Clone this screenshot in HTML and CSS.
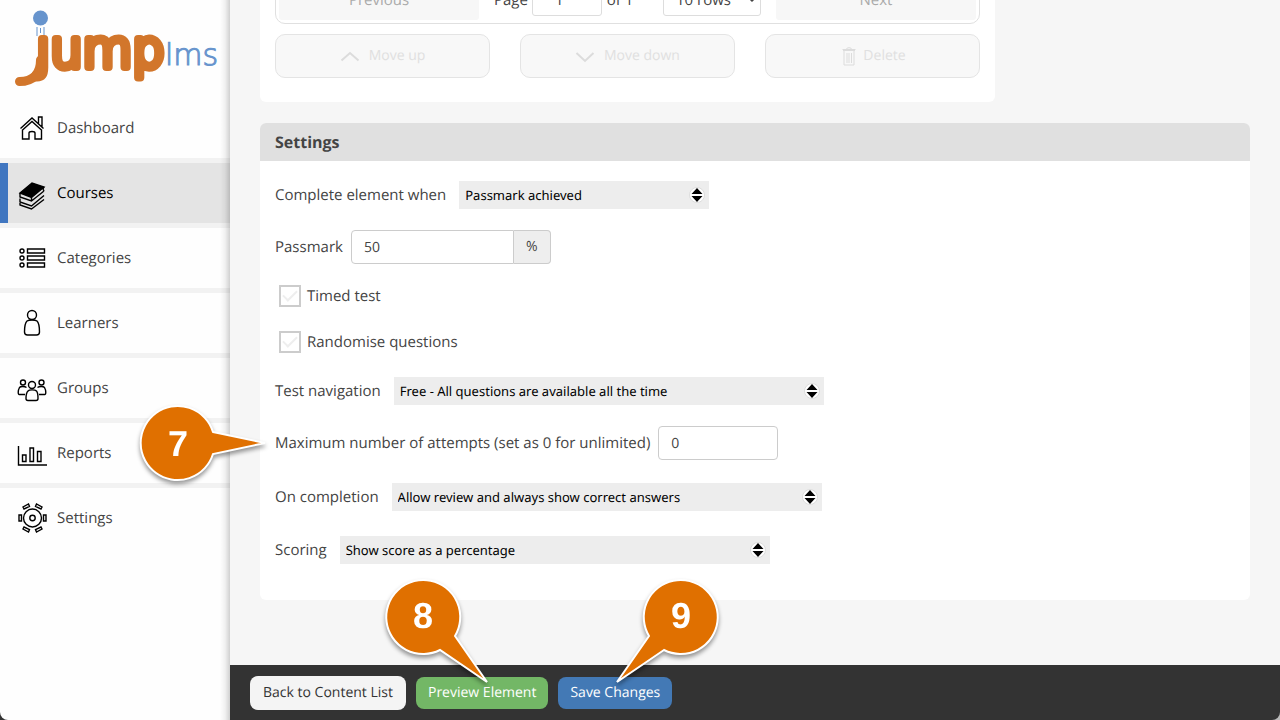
FILE: index.html
```html
<!DOCTYPE html>
<html lang="en">
<head>
<meta charset="utf-8">
<meta name="viewport" content="width=device-width, initial-scale=1">
<title>JumpLMS - Test settings</title>
<link rel="stylesheet" href="styles.css">
</head>
<body>
<div class="app">
  <div class="side-wrap">
  <aside class="sidebar">
    <svg class="logo" viewBox="0 0 230 98" role="img" aria-label="jump lms">
      <circle class="logo-ball" cx="40.500" cy="18" r="7.500"/>
      <path class="logo-motion" d="M37 27v9M40.500 28v5M44 27v9"/>
      <path class="logo-swoosh" d="M40.500 60C40.500 74 33 81.500 19.500 81.500"/>
      <text class="logo-jump" x="36" y="67">ȷump</text>
      <text class="logo-lms" x="165" y="65">lms</text>
    </svg>
    <nav class="menu">
      <a class="menu-item" href="#">
        <svg class="icon" viewBox="0 0 30 30"><path d="M3.500 15.500 15 5l11.500 10.500M5 17.500 15 8.500l10 9M21.500 10.500V4h3.500v10M5.500 17.500v8.500H12v-6c0-2 6-2 6 0v6h6.500v-8.500"/></svg>
        <span>Dashboard</span></a>
      <a class="menu-item is-active" href="#">
        <svg class="icon icon-low" viewBox="0 0 30 30"><path class="solid" d="M3 12 15 2l12 4-12.500 10.500z"/><path d="M3 12v4l11.500 4L27 10M14.500 16.500V20M27 6l-1 2 1 2M3 17.500V21l11.500 4L27 14.500M3 22v2l11.500 4L27 18.500"/></svg>
        <span>Courses</span></a>
      <a class="menu-item" href="#">
        <svg class="icon" viewBox="0 0 30 30"><circle cx="5" cy="8" r="2"/><circle cx="5" cy="15" r="2"/><circle cx="5" cy="22" r="2"/><path d="M10.500 6H27.500v4h-17zM10.500 13H27.500v4h-17zM10.500 20H27.500v4h-17z"/></svg>
        <span>Categories</span></a>
      <a class="menu-item" href="#">
        <svg class="icon" viewBox="0 0 30 30"><circle cx="15" cy="7" r="4.500"/><path d="M10 13c1.500-1 2-1 5-1s3.500 0 5 1c2 2 2.500 6 2.500 11 0 2-1 3-3 3h-9c-2 0-3-1-3-3 0-5 .5-9 2.500-11z"/></svg>
        <span>Learners</span></a>
      <a class="menu-item" href="#">
        <svg class="icon" viewBox="0 0 30 30"><circle cx="15" cy="12" r="3.500"/><circle cx="6" cy="9.500" r="2.500"/><circle cx="24.500" cy="9.500" r="2.500"/><path d="M11 18c1-1.500 7-1.500 8.500 0 1 1 1.500 4 1.500 7.500 0 1.500-1 2-2 2h-8c-1 0-2-.5-2-2 0-3.500 1-6.500 2-7.500zM8 21.500H2c-1 0-1.200-4 .5-7 1-1.200 5-1.500 7 0M22 21.500h6c1 0 1.200-4-.5-7-1-1.200-5-1.500-7 0"/></svg>
        <span>Groups</span></a>
      <a class="menu-item" href="#">
        <svg class="icon" viewBox="0 0 30 30"><path d="M1.500 8v19H30M5.500 17H9v6.500H5.500zM13 10h3.500v13.500H13zM20.500 13.500H24v10h-3.500z"/></svg>
        <span>Reports</span></a>
      <a class="menu-item" href="#">
        <svg class="icon" viewBox="0 0 30 30"><circle cx="15.500" cy="15" r="9"/><circle cx="15.500" cy="15" r="2.700"/><path d="M4.500 12H2v6h2.500zM26.500 12H29v6h-2.500zM7 6 6 4l5.500-3 1 2.500zM24 6l1-2-5.500-3-1 2.500zM7 24l-1 2 5.500 3 1-2.500zM24 24l1 2-5.500 3-1-2.500z"/></svg>
        <span>Settings</span></a>
    </nav>
  </aside>
  </div>

  <div class="workspace">
    <main class="content">
      <section class="card questions">
        <div class="pager">
          <button class="pager-btn" type="button" disabled>Previous</button>
          <div class="pager-mid">
            <label class="pager-page">Page <input class="pager-input" type="text" value="1"></label>
            <span class="pager-total">of 1</span>
            <span class="rows-wrap">
              <select class="pager-select" aria-label="Rows per page"><option>10 rows</option></select>
              <svg class="rows-arrow" viewBox="0 0 8 6"><path d="M1 1l3 3 3-3"/></svg>
            </span>
          </div>
          <button class="pager-btn" type="button" disabled>Next</button>
        </div>
        <div class="tools">
          <button class="tool" type="button" disabled><svg class="tool-icon" viewBox="0 0 20 20"><path d="M1.500 14.500 10 7l8.500 7.500"/></svg>Move up</button>
          <button class="tool" type="button" disabled><svg class="tool-icon" viewBox="0 0 20 20"><path d="M1.500 7 10 15l8.500-8"/></svg>Move down</button>
          <button class="tool tool-delete" type="button" disabled><svg class="tool-icon trash" viewBox="0 0 20 20"><path d="M4 4.500h12M7 4c0-3 6-3 6 0M5 5v14h10V5M8 7v10M10 7v10M12.500 7v10M3.500 3.500h13"/></svg>Delete</button>
        </div>
      </section>

      <section class="card settings">
        <h2 class="card-title">Settings</h2>
        <form class="fields">
          <div class="field">
            <label for="complete">Complete element when</label>
            <span class="select"><select id="complete"><option>Passmark achieved</option></select><svg class="updown" viewBox="0 0 16 16"><circle cx="8" cy="8" r="7.500"/><path d="M2.500 7 8 1l5.500 6zM2.500 9 8 15l5.500-6z"/></svg></span>
          </div>
          <div class="field field-input">
            <label for="passmark">Passmark</label>
            <span class="group"><input id="passmark" class="text" type="text" value="50"><span class="addon">%</span></span>
          </div>
          <div class="field field-check">
            <input id="timed" type="checkbox"><label for="timed">Timed test</label>
          </div>
          <div class="field field-check">
            <input id="random" type="checkbox"><label for="random">Randomise questions</label>
          </div>
          <div class="field">
            <label for="navigation">Test navigation</label>
            <span class="select wide"><select id="navigation"><option>Free - All questions are available all the time</option></select><svg class="updown" viewBox="0 0 16 16"><circle cx="8" cy="8" r="7.500"/><path d="M2.500 7 8 1l5.500 6zM2.500 9 8 15l5.500-6z"/></svg></span>
          </div>
          <div class="field field-input spaced">
            <label for="attempts">Maximum number of attempts (set as 0 for unlimited)</label>
            <input id="attempts" class="text short" type="text" value="0">
          </div>
          <div class="field spaced">
            <label for="completion">On completion</label>
            <span class="select wide"><select id="completion"><option>Allow review and always show correct answers</option></select><svg class="updown" viewBox="0 0 16 16"><circle cx="8" cy="8" r="7.500"/><path d="M2.500 7 8 1l5.500 6zM2.500 9 8 15l5.500-6z"/></svg></span>
          </div>
          <div class="field">
            <label for="scoring">Scoring</label>
            <span class="select wide"><select id="scoring"><option>Show score as a percentage</option></select><svg class="updown" viewBox="0 0 16 16"><circle cx="8" cy="8" r="7.500"/><path d="M2.500 7 8 1l5.500 6zM2.500 9 8 15l5.500-6z"/></svg></span>
          </div>
        </form>
      </section>
    </main>
    <footer class="actions">
      <button class="btn btn-back" type="button">Back to Content List</button>
      <button class="btn btn-preview" type="button">Preview Element</button>
      <button class="btn btn-save" type="button">Save Changes</button>
    </footer>
  </div>

  <svg class="callout callout-attempts" viewBox="0 0 140 90"><path d="M83 32 135 43 83 54A37 37 0 1 1 83 32Z"/><text x="48" y="56">7</text></svg>
  <svg class="callout callout-preview" viewBox="0 0 120 120"><path d="M80 63 112 109 65 77A37 37 0 1 1 80 63Z"/><text x="48" y="55">8</text></svg>
  <svg class="callout callout-save" viewBox="0 0 120 120"><path d="M55 77 8 109 40 63A37 37 0 1 1 55 77Z"/><text x="72" y="55">9</text></svg>
</div>
</body>
</html>
```
FILE: styles.css
```css
* { box-sizing: border-box; }

body {
  margin: 0;
  font-family: "Open Sans", "Noto Sans", sans-serif;
  font-size: 15px;
  line-height: 20px;
  color: #444;
  text-rendering: geometricPrecision;
}

button, input, select {
  font: inherit;
  color: inherit;
  margin: 0;
  text-rendering: inherit;
}

.app {
  position: relative;
  display: flex;
  height: 100vh;
  overflow: hidden;
}

/* Sidebar */
.side-wrap {
  flex: 0 0 230px;
  background: #333;
}
.sidebar {
  position: relative;
  height: 100%;
  overflow: hidden;
  background: #fefefe;
  border-bottom-left-radius: 8px;
}
.sidebar::after {
  content: "";
  position: absolute;
  top: 0;
  right: 0;
  bottom: 0;
  width: 10px;
  background: linear-gradient(to right, rgba(0, 0, 0, 0), rgba(0, 0, 0, 0.05) 50%, rgba(0, 0, 0, 0.18));
  pointer-events: none;
}
.logo { display: block; width: 230px; height: 98px; }
.logo-ball { fill: #6794cd; }
.logo-motion { fill: none; stroke: #6794cd; stroke-width: 1; }
.logo-swoosh { fill: none; stroke: #d2762b; stroke-width: 9; stroke-linecap: round; }
.logo-jump {
  font-family: "DejaVu Sans", sans-serif;
  font-weight: 200;
  font-size: 51px;
  fill: #d2762b;
  stroke: #d2762b;
  stroke-width: 8;
  stroke-linejoin: round;
  stroke-linecap: round;
}
.logo-lms {
  font-family: "DejaVu Sans", sans-serif;
  font-weight: 200;
  font-size: 30px;
  fill: #6794cd;
  stroke: #6794cd;
  stroke-width: 1;
}
.menu { display: flex; flex-direction: column; }
.menu-item {
  display: flex;
  align-items: center;
  gap: 10px;
  height: 65px;
  padding: 0 17px;
  border-bottom: 5px solid #f2f2f2;
  color: #444;
  text-decoration: none;
}
.menu-item span { padding-bottom: 1px; }
.menu-item:last-child { border-bottom-color: transparent; }
.menu-item.is-active {
  background: linear-gradient(to right, #4076c0 8px, #e4e4e4 8px);
  color: #000;
}
.icon {
  flex: none;
  width: 30px;
  height: 30px;
  fill: none;
  stroke: #000;
  stroke-width: 1.4;
}
.icon .solid { fill: #000; }
.icon-low { align-self: flex-end; margin-bottom: 12px; }

/* Workspace */
.workspace {
  flex: 1;
  min-width: 0;
  display: flex;
  flex-direction: column;
  background: #bbb;
}
.content {
  flex: 1;
  min-height: 0;
  overflow: hidden;
  display: flex;
  flex-direction: column;
  justify-content: flex-end;
  gap: 21px;
  padding: 0 30px 65px;
  background: #f6f6f6;
}
.card {
  flex: none;
  background: #fff;
  border-radius: 6px;
}
.questions {
  max-width: 735px;
  padding: 15px 15px 24px;
}

.pager {
  display: flex;
  height: 48px;
  padding: 3px;
  margin-bottom: 10px;
  border: 1px solid #e0e0e0;
  border-radius: 10px;
}
.pager-btn {
  flex: 0 0 200px;
  border: 0;
  border-radius: 3px;
  background: #f7f7f7;
  color: #aaa;
}
.pager-mid {
  flex: 1;
  display: flex;
  align-items: center;
  padding: 0 15px;
}
.pager-input {
  width: 70px;
  height: 32px;
  border: 1px solid #ddd;
  border-radius: 3px;
  background: #fff;
  text-align: center;
  padding: 0 15px 0 0;
}
.pager-total { margin-left: 5px; }
.rows-wrap { position: relative; margin-left: auto; }
.pager-select {
  appearance: none;
  width: 98px;
  height: 32px;
  padding: 0 12px;
  border: 1px solid #ddd;
  border-radius: 3px;
  background: #fff;
}
.rows-arrow {
  position: absolute;
  right: 5px;
  top: 13px;
  width: 8px;
  height: 6px;
  fill: none;
  stroke: #444;
  stroke-width: 1.5;
  pointer-events: none;
}
.tools {
  display: grid;
  grid-template-columns: repeat(3, 1fr);
  gap: 30px;
}
.tool {
  display: flex;
  align-items: center;
  justify-content: center;
  gap: 9px;
  height: 44px;
  border: 1px solid #e4e4e4;
  border-radius: 10px;
  background: #f8f8f8;
  color: #e0e0e0;
  font-size: 14px;
}
.tool-icon {
  width: 20px;
  height: 20px;
  fill: none;
  stroke: #dcdcdc;
  stroke-width: 2;
}
.tool-icon.trash { stroke-width: 1; }
.tool-delete { gap: 4px; }

.settings { padding-bottom: 36px; }
.card-title {
  margin: 0;
  padding: 9px 15px;
  border-radius: 6px 6px 0 0;
  background: #e0e0e0;
  font-size: 16px;
  line-height: 20px;
  font-weight: 700;
}
.fields { padding: 20px 15px 0; }
.field {
  display: flex;
  align-items: center;
  gap: 13px;
  min-height: 28px;
  margin-bottom: 21px;
}
.field label { padding-bottom: 1px; }
.field.spaced { margin-bottom: 25px; }
.field.field-input.spaced { margin-bottom: 23px; }
.field:last-child { margin-bottom: 0; }
.field-input { gap: 8px; }
.field.field-check {
  gap: 6px;
  min-height: 22px;
  padding-left: 4px;
  margin-bottom: 24px;
}
.field-check input {
  appearance: none;
  width: 22px;
  height: 22px;
  border: 2px solid #ccc;
  background: #fff;
  display: grid;
  place-items: center;
}
.field-check input::before {
  content: "";
  width: 12px;
  height: 6px;
  margin-bottom: 4px;
  border-left: 2px solid #eee;
  border-bottom: 2px solid #eee;
  transform: rotate(-45deg);
}
.select { position: relative; width: 250px; height: 28px; }
.select.wide { width: 430px; }
.select select {
  appearance: none;
  display: block;
  width: 100%;
  height: 28px;
  padding: 0 30px 0 6px;
  border: 0;
  border-radius: 0;
  background: #ededed;
  color: #000;
  font-family: "Noto Sans", sans-serif;
  font-size: 13px;
}
.updown {
  position: absolute;
  right: 4px;
  top: 6px;
  width: 16px;
  height: 16px;
  fill: #000;
  pointer-events: none;
}
.updown circle { fill: #fff; stroke: #ddd; stroke-width: 1; }
.text {
  width: 163px;
  height: 34px;
  padding: 0 12px;
  border: 1px solid #ccc;
  border-radius: 4px;
  background: #fff;
  font-size: 14px;
}
.text.short { width: 120px; }
.group { display: flex; width: 200px; }
.group .text { border-radius: 4px 0 0 4px; }
.addon {
  flex: 1;
  display: grid;
  place-items: center;
  border: 1px solid #ccc;
  border-left: 0;
  border-radius: 0 4px 4px 0;
  background: #eee;
  font-size: 14px;
}

.actions {
  flex: none;
  display: flex;
  align-items: center;
  gap: 10px;
  height: 55px;
  padding: 0 20px;
  background: #333;
  border-bottom-right-radius: 8px;
}
.btn {
  height: 32px;
  padding: 0 12px;
  border: 0;
  border-radius: 8px;
  color: #fff;
  font-size: 14px;
}
.btn-back { height: 34px; padding: 0 13px; background: #f4f4f4; color: #333; }
.btn-preview { background: #73b766; }
.btn-save { background: #4379b5; }

/* Numbered callouts laid over the page */
.callout {
  position: absolute;
  overflow: visible;
  fill: #e07000;
  stroke: #fff;
  stroke-width: 2;
  filter: drop-shadow(0 3px 2px rgba(0, 0, 0, 0.4));
  pointer-events: none;
}
.callout text {
  fill: #fff;
  stroke: none;
  font-family: "Liberation Sans", Arial, sans-serif;
  font-size: 36px;
  font-weight: 700;
  text-anchor: middle;
}
.callout-attempts { left: 130px; top: 400px; width: 140px; height: 90px; }
.callout-preview { left: 375px; top: 573px; width: 120px; height: 120px; }
.callout-save { left: 609px; top: 573px; width: 120px; height: 120px; }
```
